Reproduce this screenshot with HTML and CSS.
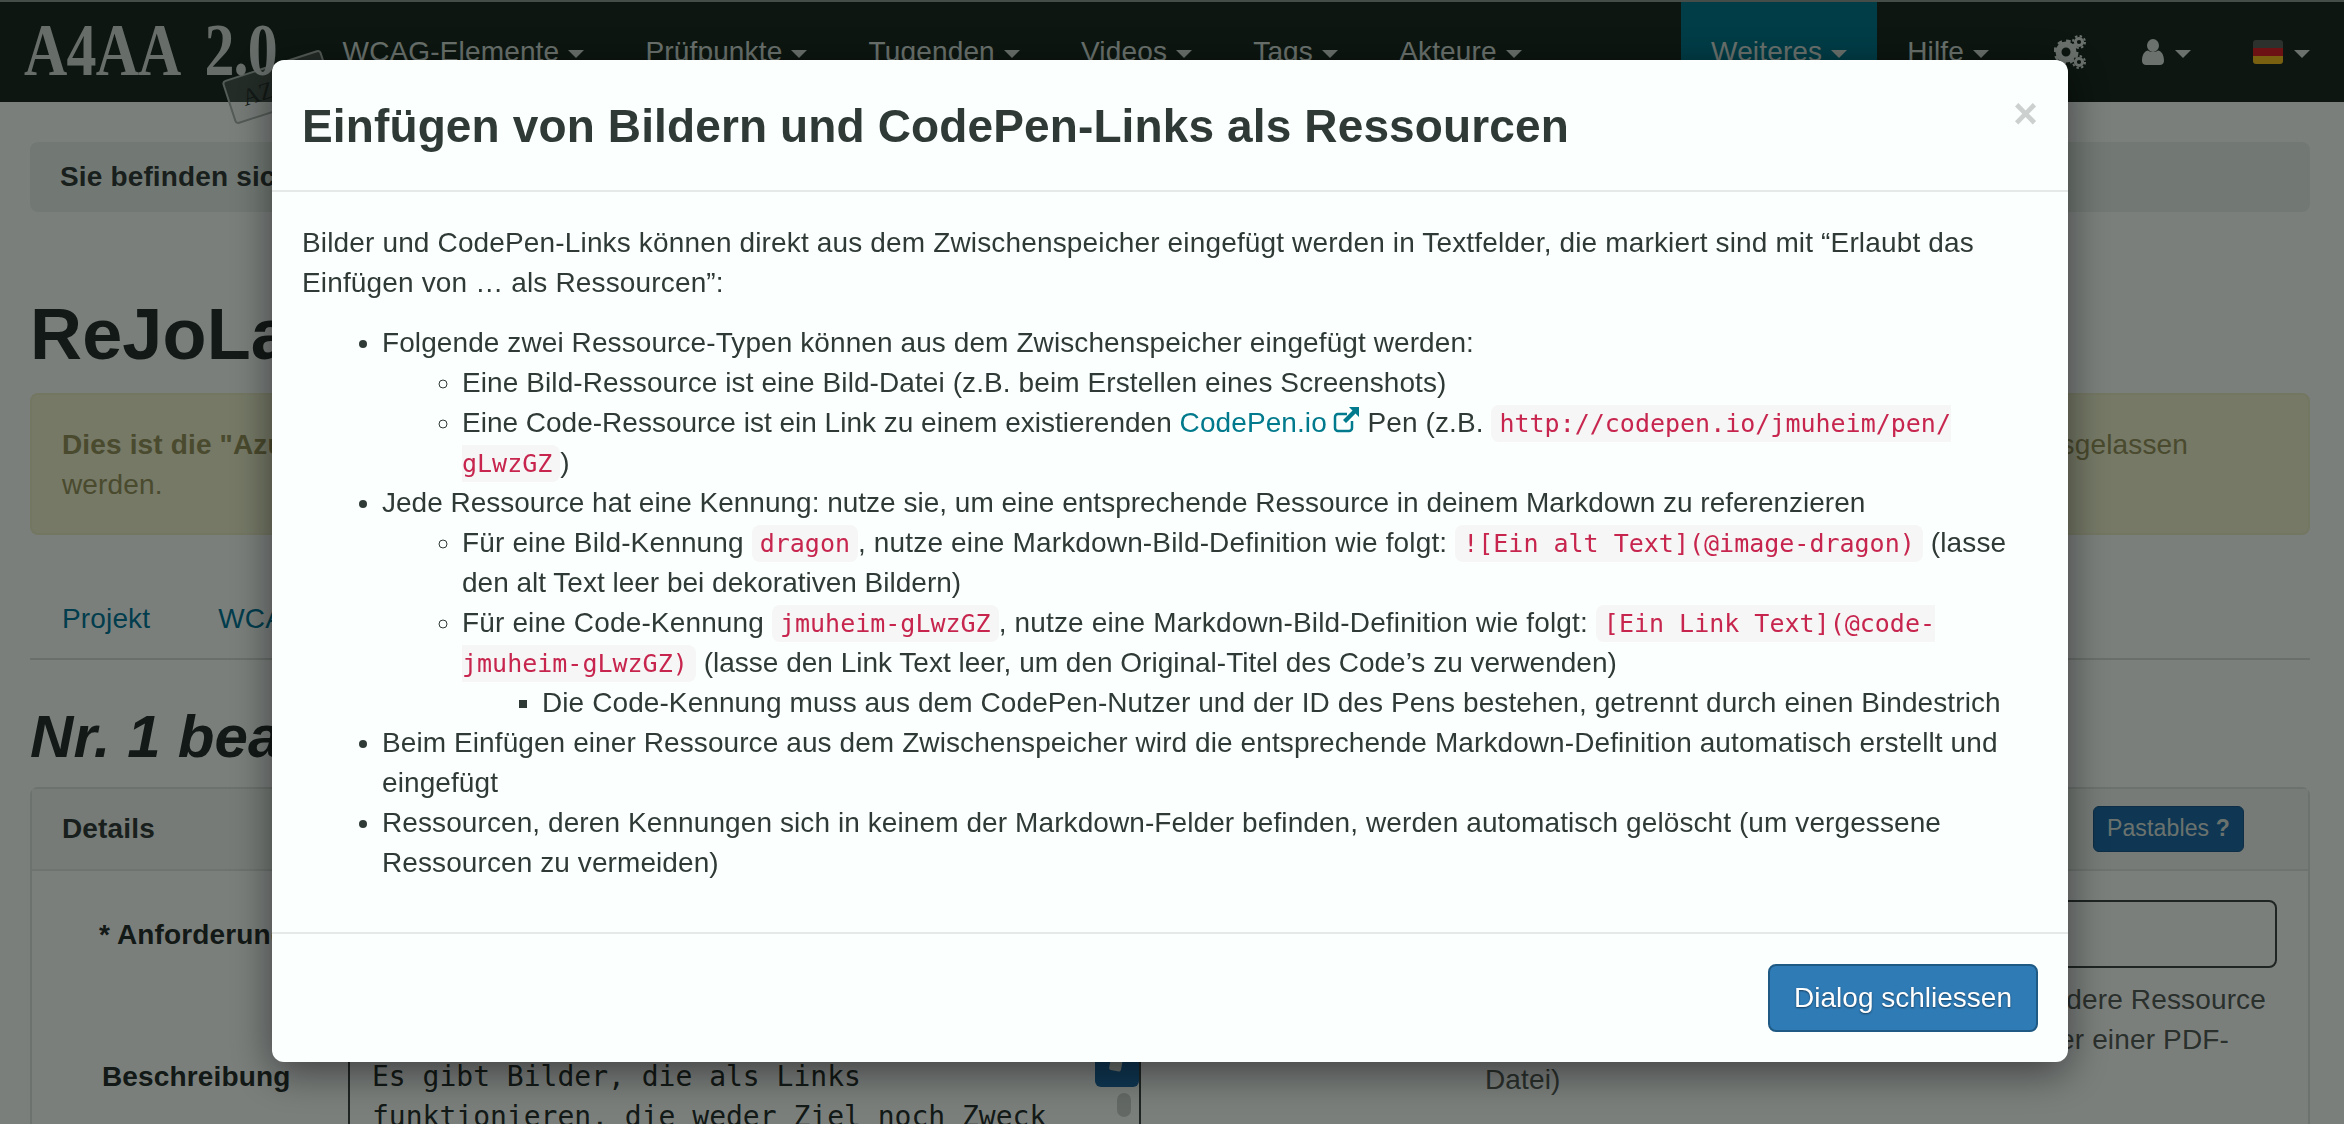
FILE: index.html
```html
<!DOCTYPE html>
<html lang="de">
  <head>
    <meta charset="UTF-8" />
    <title>Einfügen von Bildern und CodePen-Links als Ressourcen</title>
    <link rel="stylesheet" href="styles.css">
  </head>
  <body>
    <nav class="navbar">
      <a class="brand">
        <span class="brand-stamp">AZUBI</span>
        <span class="brand-name">A4AA 2.0</span>
      </a>
      <ul class="nav-list">
        <li class="nav-item">WCAG-Elemente <i class="caret"></i></li>
        <li class="nav-item">Prüfpunkte <i class="caret"></i></li>
        <li class="nav-item">Tugenden <i class="caret"></i></li>
        <li class="nav-item">Videos <i class="caret"></i></li>
        <li class="nav-item">Tags <i class="caret"></i></li>
        <li class="nav-item">Akteure <i class="caret"></i></li>
      </ul>
      <ul class="nav-list nav-right">
        <li class="nav-item active">Weiteres <i class="caret"></i></li>
        <li class="nav-item">Hilfe <i class="caret"></i></li>
        <li class="nav-item icon-item cog-item">
          <svg class="cogs" viewBox="0 0 32 36" width="32" height="36">
            <circle cx="12" cy="18" r="7.5" fill="none" stroke="#d6e4dc" stroke-width="6"/>
            <circle cx="12" cy="18" r="11" fill="none" stroke="#d6e4dc" stroke-width="3" stroke-dasharray="4.5 4.1"/>
            <circle cx="25" cy="8" r="3.6" fill="none" stroke="#d6e4dc" stroke-width="3"/>
            <circle cx="25" cy="8" r="6" fill="none" stroke="#d6e4dc" stroke-width="2" stroke-dasharray="2.4 2.3"/>
            <circle cx="25" cy="28" r="3.6" fill="none" stroke="#d6e4dc" stroke-width="3"/>
            <circle cx="25" cy="28" r="6" fill="none" stroke="#d6e4dc" stroke-width="2" stroke-dasharray="2.4 2.3"/>
          </svg>
        </li>
        <li class="nav-item icon-item user-item">
          <svg viewBox="0 0 22 26" width="22" height="26">
            <ellipse cx="11" cy="6.500" rx="6" ry="6.500" fill="#d6e4dc"/>
            <path d="M0 22c0-7 3-10 6-10.500 3 2 7 2 10 0 3 .5 6 3.500 6 10.500 0 2.500-2 4-4 4H4c-2 0-4-1.500-4-4z" fill="#d6e4dc"/>
          </svg>
          <i class="caret"></i>
        </li>
        <li class="nav-item icon-item">
          <span class="flag"><i class="flag-black"></i><i class="flag-red"></i><i class="flag-gold"></i></span>
          <i class="caret"></i>
        </li>
      </ul>
    </nav>

    <main class="page">
      <div class="breadcrumb">Sie befinden sich</div>
      <h1 class="page-title">ReJoLab</h1>
      <div class="alert">
        <div class="alert-line"><span><b>Dies ist die "Azubi"</b></span><span>ausgelassen</span></div>
        <div>werden.</div>
      </div>
      <ul class="tabs">
        <li>Projekt</li>
        <li>WCAG</li>
      </ul>
      <h2 class="section-title">Nr. 1 beachten</h2>
      <section class="panel">
        <header class="panel-head">
          <b>Details</b>
          <span class="badge">Pastables <b>?</b></span>
        </header>
        <div class="panel-body">
          <div class="form-row">
            <label class="label-first">* Anforderung</label>
            <div class="input"></div>
          </div>
          <div class="form-row form-row-split">
            <label class="label-second">Beschreibung</label>
            <div class="textarea">
              Es gibt Bilder, die als Links<br>funktionieren, die weder Ziel noch Zweck
              <span class="textarea-tool"><i class="tool-pencil"></i></span>
              <span class="textarea-thumb"></span>
            </div>
            <div class="help">
              <div class="help-one">andere Ressource</div>
              <div class="help-two">oder einer PDF-</div>
              <div>Datei)</div>
            </div>
          </div>
        </div>
      </section>
    </main>

    <div class="backdrop"></div>

    <div class="modal">
      <div class="modal-header">
        <h4 class="modal-title">Einfügen von Bildern und CodePen-Links als Ressourcen</h4>
        <span class="close">×</span>
      </div>
      <div class="modal-body">
        <p>Bilder und CodePen-Links können direkt aus dem Zwischenspeicher eingefügt werden in Textfelder, die markiert sind mit “Erlaubt das Einfügen von … als Ressourcen”:</p>
        <ul>
          <li>Folgende zwei Ressource-Typen können aus dem Zwischenspeicher eingefügt werden:
            <ul>
              <li>Eine Bild-Ressource ist eine Bild-Datei (z.B. beim Erstellen eines Screenshots)</li>
              <li><span class="tight">Eine Code-Ressource ist ein Link zu einem existierenden</span> <a class="link">CodePen.io <svg class="ext" viewBox="0 0 28 28" width="28" height="28"><path d="M20 15v7a3 3 0 0 1-3 3H6a3 3 0 0 1-3-3V11a3 3 0 0 1 3-3h9" fill="none" stroke="currentColor" stroke-width="2.500"/><path d="M17 1h10v10l-3.500-3.500L14 17l-3-3 9.500-9.500z" fill="currentColor"/></svg></a> Pen (z.B. <code>http://codepen.io/jmuheim/pen/<wbr>gLwzGZ</code>)</li>
            </ul>
          </li>
          <li><span class="tight">Jede Ressource hat eine Kennung: nutze sie, um eine entsprechende Ressource in deinem Markdown zu referenzieren</span>
            <ul>
              <li class="wide">Für eine Bild-Kennung <code>dragon</code>, nutze eine Markdown-Bild-Definition wie folgt: <code>![Ein alt Text](@image-dragon)</code> (lasse <span class="tight">den alt Text leer bei dekorativen Bildern)</span></li>
              <li class="wide">Für eine Code-Kennung <code>jmuheim-gLwzGZ</code>, nutze eine Markdown-Bild-Definition wie folgt: <code>[Ein Link Text](@code-jmuheim-gLwzGZ)</code> <span class="tight">(lasse den Link Text leer, um den Original-Titel des Code’s zu verwenden)</span>
                <ul>
                  <li class="normal">Die Code-Kennung muss aus dem CodePen-Nutzer und der ID des Pens bestehen, getrennt durch einen Bindestrich</li>
                </ul>
              </li>
            </ul>
          </li>
          <li>Beim Einfügen einer Ressource aus dem Zwischenspeicher wird die entsprechende Markdown-Definition automatisch erstellt und eingefügt</li>
          <li>Ressourcen, deren Kennungen sich in keinem der Markdown-Felder befinden, werden automatisch gelöscht (um vergessene Ressourcen zu vermeiden)</li>
        </ul>
      </div>
      <div class="modal-footer">
        <button class="btn-primary">Dialog schliessen</button>
      </div>
    </div>
  </body>
</html>
```

FILE: styles.css
```css
html,
body {
  height: 100%;
}

body {
  margin: 0;
  overflow: hidden;
  font-family: "Liberation Sans", Arial, sans-serif;
  font-size: 28px;
  line-height: 40px;
  letter-spacing: 0.15px;
  color: #323f3a;
  background-color: #f6fff9;
}

ul {
  margin: 0;
  padding: 0;
}

/* navbar */
.navbar {
  display: flex;
  height: 100px;
  border-top: 2px solid #8a9a92;
  background-color: #1a2c22;
  color: #d6e4dc;
}

.brand {
  position: relative;
  width: 312px;
  flex: none;
}

.brand-name {
  position: absolute;
  left: 24px;
  top: 20px;
  font-family: "Liberation Serif", serif;
  font-weight: bold;
  font-size: 74px;
  line-height: 56px;
  letter-spacing: -1px;
  word-spacing: 16px;
  white-space: nowrap;
  color: #cfdcd5;
  transform: scaleX(0.81);
  transform-origin: left center;
}

.brand-stamp {
  position: absolute;
  left: 226px;
  top: 62px;
  width: 100px;
  height: 42px;
  border: 2px solid #a9b8b0;
  border-radius: 4px;
  font-family: "Liberation Serif", serif;
  font-size: 24px;
  line-height: 42px;
  text-align: center;
  color: #26332d;
  background-color: rgba(210, 225, 218, 0.25);
  transform: rotate(-18deg);
}

.nav-list {
  display: flex;
  list-style: none;
}

.nav-right {
  margin-left: auto;
  padding-right: 4px;
}

.nav-item {
  display: flex;
  align-items: center;
  gap: 9px;
  padding: 0 30.6px;
  white-space: nowrap;
}

.nav-right .nav-item {
  padding: 0 30px;
}

.nav-item.active {
  background-color: #027a8e;
}

.nav-right .icon-item {
  padding: 0 30px 0 26px;
}

.nav-right .cog-item {
  padding: 0 30px 0 35px;
}

.nav-right .user-item {
  padding-right: 36px;
}

.icon-item .caret {
  margin-left: 2px;
}

.caret {
  width: 0;
  height: 0;
  margin-top: 4px;
  border-top: 8px solid currentColor;
  border-left: 8px solid transparent;
  border-right: 8px solid transparent;
}

.flag {
  display: flex;
  flex-direction: column;
  width: 30px;
  height: 24px;
  border-radius: 3px;
  overflow: hidden;
}

.flag i {
  flex: 1;
}

.flag-black {
  background-color: #5a625d;
}

.flag-red {
  background-color: #d8242a;
}

.flag-gold {
  background-color: #f0c020;
}

/* page below the dialog */
.page {
  padding: 40px 34px 0 30px;
}

.breadcrumb {
  height: 70px;
  padding: 0 30px;
  border-radius: 8px;
  line-height: 70px;
  font-weight: bold;
  color: #323f3a;
  background-color: #e4f2e8;
}

.page-title {
  margin: 82px 0 0;
  font-size: 72px;
  line-height: 80px;
  color: #26332d;
}

.alert {
  margin-top: 19px;
  padding: 30px;
  height: 142px;
  box-sizing: border-box;
  border: 2px solid #e6eec4;
  border-radius: 8px;
  color: #94945c;
  background-color: #eaf2cc;
}

.alert-line {
  display: flex;
  justify-content: space-between;
  padding-right: 90px;
}

.tabs {
  display: flex;
  gap: 68px;
  list-style: none;
  height: 125px;
  box-sizing: border-box;
  padding: 64px 32px 0;
  border-bottom: 2px solid #d4dfd8;
  color: #027a9a;
}

.section-title {
  margin: 44px 0 0;
  font-size: 60px;
  font-style: italic;
  line-height: 66px;
  color: #26332d;
}

.panel {
  margin-top: 17px;
  border: 2px solid #d9e4dd;
  border-radius: 8px 8px 0 0;
}

.panel-head {
  display: flex;
  align-items: center;
  justify-content: space-between;
  height: 80px;
  padding: 0 64px 0 30px;
  border-bottom: 2px solid #dce7e0;
  background-color: #ecf7f0;
}

.badge {
  padding: 0 13px;
  height: 44px;
  line-height: 42px;
  font-size: 23px;
  border: 1px solid #1a5c8c;
  border-radius: 6px;
  color: #d6e4dc;
  background-color: #1e6ea8;
}

.panel-body {
  padding: 29px 31px 0 0;
}

.form-row {
  display: flex;
  height: 68px;
}

.form-row label {
  flex: none;
  width: 316px;
  box-sizing: border-box;
  font-weight: bold;
  white-space: nowrap;
  color: #26332d;
}

.label-first {
  padding: 15px 0 0 67px;
}

.label-second {
  padding: 8px 0 0 70px;
}

.input {
  flex: 1;
  border: 2px solid #3c4a44;
  border-radius: 8px;
}

.form-row-split {
  height: auto;
  margin-top: 81px;
}

.textarea {
  position: relative;
  flex: none;
  width: 793px;
  height: 200px;
  box-sizing: border-box;
  padding: 6px 22px;
  border: 2px solid #3c4a44;
  font-family: "DejaVu Sans Mono", monospace;
  letter-spacing: 0;
  color: #26332d;
}

.textarea-tool {
  position: absolute;
  top: -20px;
  right: 0;
  width: 44px;
  height: 56px;
  border-radius: 0 0 6px 6px;
  background-color: #1e6ea8;
}

.tool-pencil {
  position: absolute;
  left: 16px;
  top: 14px;
  width: 12px;
  height: 26px;
  border-radius: 2px;
  background-color: #d6e4dc;
  transform: rotate(10deg);
}

.textarea-thumb {
  position: absolute;
  top: 42px;
  right: 8px;
  width: 14px;
  height: 24px;
  border-radius: 7px;
  background-color: #c8d3cc;
}

.help {
  flex: 1;
  margin-left: 344px;
  margin-top: -69px;
  color: #556059;
}

.help-one {
  text-align: right;
  margin-right: 11px;
}

.help-two {
  text-align: right;
  margin-right: 48px;
}

/* dialog */
.backdrop {
  position: fixed;
  inset: 0;
  background-color: rgba(0, 0, 0, 0.5);
}

.modal {
  position: fixed;
  top: 60px;
  left: 272px;
  width: 1796px;
  border-radius: 12px;
  background-color: #fbfffe;
  box-shadow: 0 10px 40px rgba(0, 0, 0, 0.5);
}

.modal-header {
  position: relative;
  height: 130px;
  padding: 0 30px;
  border-bottom: 2px solid #e5eae9;
}

.modal-title {
  margin: 0;
  font-size: 46px;
  line-height: 132px;
  letter-spacing: 0.13px;
  font-weight: bold;
  color: #2f3a36;
}

.close {
  position: absolute;
  top: 34px;
  right: 30px;
  font-size: 42px;
  line-height: 40px;
  font-weight: bold;
  color: #ccd1cf;
}

.modal-body {
  padding: 31px 30px 29px;
  color: #2f3a36;
}

.modal-body p {
  margin: 0 0 20px;
}

.modal-body ul {
  padding-left: 80px;
  letter-spacing: 0.09px;
}

.modal-body > ul {
  margin-bottom: 20px;
}

.modal-body .wide {
  letter-spacing: 0.15px;
}

.modal-body .normal {
  letter-spacing: 0.09px;
}

.tight {
  letter-spacing: 0;
}

.link {
  color: #007a8c;
}

.ext {
  margin-left: -3px;
  vertical-align: -2px;
}

code {
  padding: 4px 8px;
  border-radius: 8px;
  font-family: "DejaVu Sans Mono", monospace;
  font-size: 25px;
  line-height: 1;
  letter-spacing: 0;
  color: #c7254e;
  background-color: #f5f6f5;
}

.modal-footer {
  display: flex;
  justify-content: flex-end;
  padding: 30px;
  border-top: 2px solid #e5eae9;
}

.btn-primary {
  height: 68px;
  padding: 0 24px;
  border: 2px solid #1f5a85;
  border-radius: 8px;
  font-family: inherit;
  font-size: 28px;
  letter-spacing: 0;
  color: #fff;
  text-shadow: 0 1px 2px rgba(0, 0, 0, 0.5);
  background-color: #2f7bb6;
}
```
